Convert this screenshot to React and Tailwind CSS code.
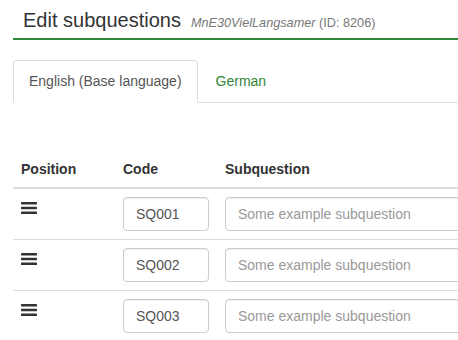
import React from "react";

function Bars() {
  return (
    <svg width="16" height="12" viewBox="0 0 16 12" className="block">
      <rect x="0" y="0" width="16" height="2.4" rx="0.6" fill="#333" />
      <rect x="0" y="4.8" width="16" height="2.4" rx="0.6" fill="#333" />
      <rect x="0" y="9.6" width="16" height="2.4" rx="0.6" fill="#333" />
    </svg>
  );
}

const rows = ["SQ001", "SQ002", "SQ003"];

export default function App() {
  return (
    <div className="w-[458px] h-[340px] overflow-hidden bg-white font-['Liberation_Sans',Arial,sans-serif] text-[14px] leading-[20px] text-[#333]">
      <div className="pl-[13px] pt-[9px]">
        <div className="flex items-baseline h-[31px] border-b-2 border-[#328637] pl-[10px] pb-[7px] whitespace-nowrap">
          <span className="text-[20px] leading-[22px]">Edit subquestions</span>
          <span className="ml-[10px] text-[12.7px] leading-[22px] text-[#777]">
            <i>MnE30VielLangsamer</i> (ID: 8206)
          </span>
        </div>
      </div>

      <div className="pl-[13px] pt-[20px]">
        <div className="flex border-b border-[#ddd]">
          <div className="-mb-px border border-[#ddd] border-b-white rounded-t-[4px] bg-white px-[15px] py-[10px] text-[#555] whitespace-nowrap">
            English (Base language)
          </div>
          <div className="ml-[2px] border border-transparent px-[15px] py-[10px] text-[#328637] whitespace-nowrap">
            German
          </div>
        </div>
      </div>

      <div className="pl-[13px] pt-[48px]">
        <div className="grid grid-cols-[102px_102px_1fr] border-b-2 border-[#ddd] font-bold">
          <div className="p-[8px]">Position</div>
          <div className="p-[8px]">Code</div>
          <div className="p-[8px]">Subquestion</div>
        </div>
        {rows.map((code, i) => (
          <div
            key={code}
            className={
              "grid grid-cols-[102px_102px_1fr] " +
              (i > 0 ? "border-t border-[#ddd]" : "")
            }
          >
            <div className="p-[8px] pt-[13px]">
              <Bars />
            </div>
            <div className="p-[8px]">
              <div className="h-[34px] border border-[#ccc] rounded-[4px] px-[12px] py-[6px] text-[#555] shadow-[inset_0_1px_1px_rgba(0,0,0,0.075)]">
                {code}
              </div>
            </div>
            <div className="py-[8px] pl-[8px]">
              <div className="w-[300px] h-[34px] border border-[#ccc] rounded-[4px] px-[12px] py-[6px] text-[#999] whitespace-nowrap shadow-[inset_0_1px_1px_rgba(0,0,0,0.075)]">
                Some example subquestion
              </div>
            </div>
          </div>
        ))}
      </div>
    </div>
  );
}
